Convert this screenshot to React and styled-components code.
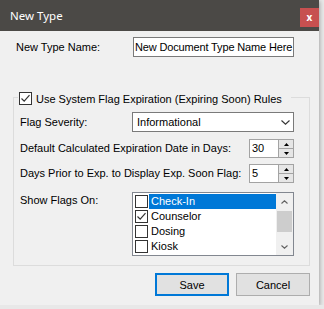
import styled, { createGlobalStyle } from 'styled-components'

const GlobalStyle = createGlobalStyle`
  html, body {
    margin: 0;
    padding: 0;
  }
  body {
    background: #e8e8e8;
    font-family: "Liberation Sans", Arial, sans-serif;
    font-size: 11px;
    color: #000;
  }
`

const Dialog = styled.div`
  width: 319px;
  height: 305px;
  background: #f0f0f0;
  box-shadow: 1px 1px 4px rgba(0, 0, 0, 0.28);
  display: flex;
  flex-direction: column;
`

const TitleBar = styled.div`
  height: 31px;
  flex: none;
  background: #4b4946;
  display: flex;
  align-items: flex-start;
  padding-left: 10px;
`

const Title = styled.span`
  font-family: "Noto Sans", "Open Sans", sans-serif;
  font-size: 11.5px;
  color: #fff;
  line-height: 31px;
`

const CloseButton = styled.button`
  margin: 8px 0 0 auto;
  width: 19px;
  height: 19px;
  padding: 0;
  border: 0;
  background: #c75050;
  color: #fff;
  font-family: "Noto Sans", sans-serif;
  font-weight: 700;
  font-size: 10px;
  line-height: 17px;
`

const Body = styled.div`
  flex: 1;
  padding: 6px 9px 0 13px;
  display: flex;
  flex-direction: column;
`

const NameRow = styled.div`
  display: grid;
  grid-template-columns: 117px 161px;
  align-items: center;
  margin-left: 3px;
  height: 20px;
`

const TextBox = styled.div`
  height: 20px;
  box-sizing: border-box;
  border: 1px solid #7a7a7a;
  background: #fff;
  padding-left: 1px;
  display: flex;
  align-items: center;
  white-space: nowrap;
  overflow: hidden;
  letter-spacing: -0.15px;
`

const Group = styled.div`
  margin-top: 40px;
  width: 297px;
  height: 169px;
  box-sizing: border-box;
  border: 1px solid #dcdcdc;
  padding: 0 15px 0 6px;
  display: flex;
  flex-direction: column;
`

const Legend = styled.div`
  margin: -6px 0 0 -2px;
  height: 13px;
  align-self: flex-start;
  background: #f0f0f0;
  padding: 0 9px 0 1px;
  display: flex;
  align-items: center;
  gap: 4px;
  white-space: nowrap;
`

const Row = styled.div`
  display: flex;
  justify-content: space-between;
  align-items: ${(p) => (p.$top ? 'flex-start' : 'center')};
  margin-top: ${(p) => p.$gap}px;
  height: ${(p) => p.$h}px;
`

const Label = styled.span`
  white-space: nowrap;
  line-height: 13px;
  margin-top: ${(p) => (p.$top ? '2px' : '0')};
`

const Select = styled.div`
  width: 162px;
  height: 20px;
  box-sizing: border-box;
  border: 1px solid #7a7a7a;
  background: #fff;
  display: flex;
  align-items: center;
  justify-content: space-between;
  padding: 0 3px 0 4px;
`

const Numeric = styled.div`
  width: 45px;
  height: 19px;
  box-sizing: border-box;
  border: 1px solid #a3a3a3;
  background: #fff;
  display: flex;
`

const NumValue = styled.span`
  flex: 1;
  padding-left: 2px;
  line-height: 17px;
`

const Spin = styled.div`
  width: 14px;
  display: flex;
  flex-direction: column;
  border-left: 1px solid #a3a3a3;
`

const SpinButton = styled.div`
  flex: 1;
  background: #e6e6e6;
  display: flex;
  align-items: center;
  justify-content: center;
  & + & {
    border-top: 1px solid #a3a3a3;
  }
`

const ListBox = styled.div`
  width: 162px;
  height: 64px;
  box-sizing: border-box;
  border: 1px solid #828790;
  background: #fff;
  display: flex;
`

const Items = styled.div`
  flex: 1;
  padding: 1px 0 0 2px;
  display: flex;
  flex-direction: column;
`

const Item = styled.div`
  height: 15px;
  display: flex;
  align-items: center;
`

const ItemText = styled.span`
  flex: 1;
  height: 15px;
  line-height: 15px;
  margin-left: 1px;
  padding-left: 2px;
  background: ${(p) => (p.$selected ? '#0078d7' : 'transparent')};
  color: ${(p) => (p.$selected ? '#fff' : '#000')};
`

const ScrollBar = styled.div`
  width: 17px;
  background: #f0f0f0;
  display: flex;
  flex-direction: column;
  align-items: center;
`

const ScrollArrow = styled.div`
  height: 17px;
  width: 17px;
  margin-top: ${(p) => (p.$bottom ? 'auto' : '0')};
  display: flex;
  align-items: center;
  justify-content: center;
`

const Thumb = styled.div`
  width: 15px;
  height: 21px;
  margin-top: 1px;
  background: #cdcdcd;
`

const Box = styled.span`
  width: 13px;
  height: 13px;
  flex: none;
  box-sizing: border-box;
  border: 1px solid #333;
  background: #fff;
  display: flex;
  align-items: center;
  justify-content: center;
`

const Footer = styled.div`
  width: 297px;
  margin-top: 7px;
  display: flex;
  justify-content: flex-end;
  gap: 7px;
`

const Button = styled.button`
  width: 74px;
  height: 23px;
  box-sizing: border-box;
  background: #e1e1e1;
  border: ${(p) => (p.$primary ? '2px solid #0078d7' : '1px solid #adadad')};
  font-family: "Liberation Sans", Arial, sans-serif;
  font-size: 11px;
  color: #000;
  padding: 0;
`

const Check = ({ checked }) => (
  <Box>
    {checked && (
      <svg width="11" height="11" viewBox="0 0 11 11">
        <path d="M1.5 5.5 L4.2 8.2 L9.5 2.2" fill="none" stroke="#333" strokeWidth="1.2" />
      </svg>
    )}
  </Box>
)

const Chevron = ({ up, w = 9, h = 5, color = '#333' }) => (
  <svg width={w} height={h} viewBox={`0 0 ${w} ${h}`}>
    <path
      d={up ? `M0.5 ${h - 0.5} L${w / 2} 0.8 L${w - 0.5} ${h - 0.5}` : `M0.5 0.5 L${w / 2} ${h - 0.8} L${w - 0.5} 0.5`}
      fill="none"
      stroke={color}
      strokeWidth="1.1"
    />
  </svg>
)

const Triangle = ({ up }) => (
  <svg width="5" height="3" viewBox="0 0 5 3">
    <path d={up ? 'M0 3 L2.5 0 L5 3 Z' : 'M0 0 L2.5 3 L5 0 Z'} fill="#000" />
  </svg>
)

const NumberBox = ({ value }) => (
  <Numeric>
    <NumValue>{value}</NumValue>
    <Spin>
      <SpinButton>
        <Triangle up />
      </SpinButton>
      <SpinButton>
        <Triangle />
      </SpinButton>
    </Spin>
  </Numeric>
)

const flags = [
  { name: 'Check-In', checked: false, selected: true },
  { name: 'Counselor', checked: true },
  { name: 'Dosing', checked: false },
  { name: 'Kiosk', checked: false },
]

export default function App() {
  return (
    <>
      <GlobalStyle />
      <Dialog>
        <TitleBar>
          <Title>New Type</Title>
          <CloseButton>x</CloseButton>
        </TitleBar>
        <Body>
          <NameRow>
            <Label>New Type Name:</Label>
            <TextBox>New Document Type Name Here</TextBox>
          </NameRow>
          <Group>
            <Legend>
              <Check checked />
              <span>Use System Flag Expiration (Expiring Soon) Rules</span>
            </Legend>
            <Row $gap={7} $h={20}>
              <Label>Flag Severity:</Label>
              <Select>
                <span>Informational</span>
                <Chevron />
              </Select>
            </Row>
            <Row $gap={7} $h={19}>
              <Label>Default Calculated Expiration Date in Days:</Label>
              <NumberBox value="30" />
            </Row>
            <Row $gap={6} $h={19}>
              <Label>Days Prior to Exp. to Display Exp. Soon Flag:</Label>
              <NumberBox value="5" />
            </Row>
            <Row $gap={9} $h={64} $top>
              <Label $top>Show Flags On:</Label>
              <ListBox>
                <Items>
                  {flags.map((f) => (
                    <Item key={f.name}>
                      <Check checked={f.checked} />
                      <ItemText $selected={f.selected}>{f.name}</ItemText>
                    </Item>
                  ))}
                </Items>
                <ScrollBar>
                  <ScrollArrow>
                    <Chevron up w={7} h={4} color="#606060" />
                  </ScrollArrow>
                  <Thumb />
                  <ScrollArrow $bottom>
                    <Chevron w={7} h={4} color="#606060" />
                  </ScrollArrow>
                </ScrollBar>
              </ListBox>
            </Row>
          </Group>
          <Footer>
            <Button $primary>Save</Button>
            <Button>Cancel</Button>
          </Footer>
        </Body>
      </Dialog>
    </>
  )
}
